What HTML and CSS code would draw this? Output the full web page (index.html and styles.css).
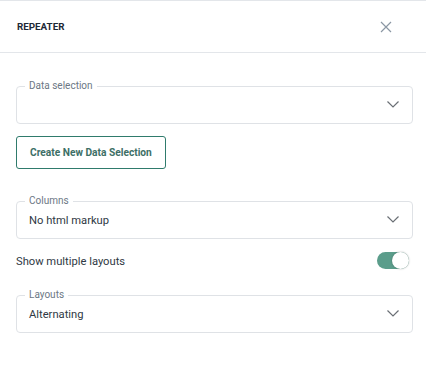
FILE: index.html
```html
<!DOCTYPE html>
<html>
<head>
<meta charset="utf-8">
<link rel="stylesheet" href="styles.css">
</head>
<body>
<div class="panel">
  <header class="head">
    <span class="title">REPEATER</span>
    <svg class="close" width="12" height="12" viewBox="0 0 12 12"><path d="M1 1L11 11M11 1L1 11" stroke="#8b97a4" stroke-width="1.2" fill="none"/></svg>
  </header>
  <div class="body">
    <div class="field first">
      <span class="legend">Data selection</span>
      <span class="value"></span>
      <svg class="chev" width="12" height="7" viewBox="0 0 12 7"><path d="M0.5 0.5L6 6L11.5 0.5" stroke="#6a6f75" stroke-width="1.2" fill="none"/></svg>
    </div>
    <button class="btn">Create New Data Selection</button>
    <div class="field cols">
      <span class="legend">Columns</span>
      <span class="value">No html markup</span>
      <svg class="chev" width="12" height="7" viewBox="0 0 12 7"><path d="M0.5 0.5L6 6L11.5 0.5" stroke="#6a6f75" stroke-width="1.2" fill="none"/></svg>
    </div>
    <div class="row">
      <span class="rowlabel">Show multiple layouts</span>
      <span class="toggle"><span class="knob"></span></span>
    </div>
    <div class="field layouts">
      <span class="legend">Layouts</span>
      <span class="value">Alternating</span>
      <svg class="chev" width="12" height="7" viewBox="0 0 12 7"><path d="M0.5 0.5L6 6L11.5 0.5" stroke="#6a6f75" stroke-width="1.2" fill="none"/></svg>
    </div>
  </div>
</div>
</body>
</html>
```
FILE: styles.css
```css
html, body { margin: 0; padding: 0; background: #fff; }
body { font-family: Roboto, "Liberation Sans", sans-serif; color: #2f3944; }
.panel { width: 426px; }
.head {
  height: 51px;
  border-top: 1px solid #e3e6ea;
  border-bottom: 1px solid #e3e6ea;
  display: flex;
  align-items: center;
  justify-content: space-between;
  padding: 0 34px 0 17px;
}
.title { font-size: 9.8px; font-weight: 700; color: #1e2936; }
.close { display: block; }
.body { padding: 0 13px 0 16px; display: flex; flex-direction: column; align-items: flex-start; }
.field {
  position: relative;
  align-self: stretch;
  height: 36px;
  border: 1px solid #dfe2e6;
  border-radius: 4px;
  display: flex;
  align-items: center;
  justify-content: space-between;
  padding: 0 13px 0 12px;
}
.first { margin-top: 33px; }
.cols { margin-top: 32px; }
.layouts { margin-top: 26px; }
.legend {
  position: absolute;
  left: 8px;
  top: -7px;
  padding: 0 4px;
  background: #fff;
  font-size: 10px;
  line-height: 12px;
  color: #6c7784;
}
.value { font-size: 11.2px; color: #2f3944; }
.chev { display: block; margin-top: -1px; }
.btn {
  margin-top: 12px;
  height: 33px;
  padding: 0 13px;
  border: 1px solid #2f7b6c;
  border-radius: 3px;
  background: #fff;
  font-family: Roboto, "Liberation Sans", sans-serif;
  font-size: 10.2px;
  font-weight: 700;
  color: #3d6f66;
}
.row {
  align-self: stretch;
  margin-top: 12px;
  height: 18px;
  display: flex;
  align-items: center;
  justify-content: space-between;
  padding-right: 4px;
}
.rowlabel { font-size: 11.2px; color: #2f3944; margin-top: 3px; }
.toggle {
  position: relative;
  width: 32px;
  height: 17px;
  border-radius: 9px;
  background: #5b9d8b;
  display: block;
}
.knob {
  position: absolute;
  right: 0;
  top: 0;
  width: 17px;
  height: 17px;
  border-radius: 50%;
  background: #fff;
  box-shadow: 0 0 2px rgba(0,0,0,0.3);
}
```
